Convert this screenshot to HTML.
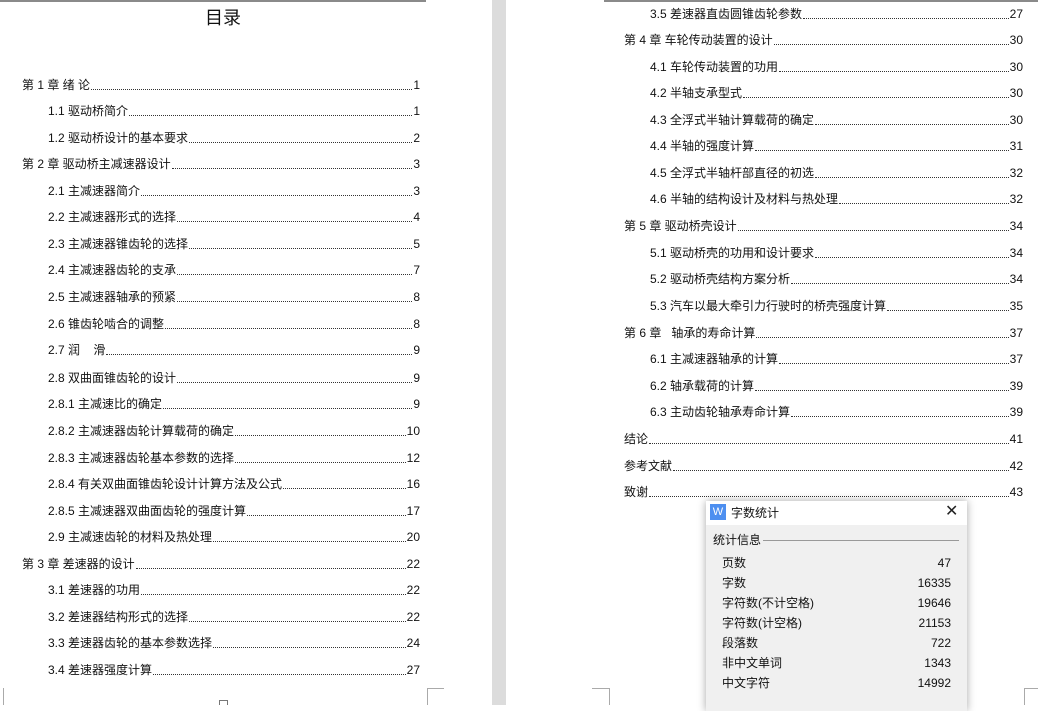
<!DOCTYPE html>
<html><head><meta charset="utf-8"><style>
*{margin:0;padding:0;box-sizing:border-box}
body{width:1038px;height:705px;overflow:hidden;background:#fff;position:relative;font-family:"Liberation Sans","Noto Sans CJK SC",sans-serif;color:#111}
.gap{position:absolute;left:492px;top:0;width:14px;height:705px;background:#dcdcdc}
.r{position:absolute;display:flex;align-items:flex-end;font-size:12px;line-height:14px;height:14px;white-space:nowrap}
.r .d{flex:1;border-bottom:1px dotted #333;margin:0 1px 2px 1px}
.l{left:0;width:420px}
.rt{left:0;width:1023px}
.hl{position:absolute;top:0;height:2px;background:#8a8a8a}
.cm{position:absolute;border-color:#aaa;border-style:solid;border-width:0}
.dlg{position:absolute;left:706px;top:501px;width:261px;height:210px;background:#f0f0f0;box-shadow:0 0 8px rgba(0,0,0,.35)}
.tb{height:24px;background:#fff;position:relative;font-size:12px}
.dr{position:absolute;left:16px;width:229px;display:flex;justify-content:space-between;font-size:12px;line-height:14px}
</style></head><body>
<div class="gap"></div>
<div class="hl" style="left:0;width:426px"></div>
<div class="hl" style="left:604px;width:434px"></div>
<div style="position:absolute;left:0;width:446px;top:6px;text-align:center;font-size:18px;line-height:24px">目录</div>

<div class="r l" style="top:78px;padding-left:22px"><span>第 1 章 绪 论</span><span class="d"></span><span>1</span></div>
<div class="r l" style="top:104px;padding-left:48px"><span>1.1 驱动桥简介</span><span class="d"></span><span>1</span></div>
<div class="r l" style="top:131px;padding-left:48px"><span>1.2 驱动桥设计的基本要求</span><span class="d"></span><span>2</span></div>
<div class="r l" style="top:157px;padding-left:22px"><span>第 2 章 驱动桥主减速器设计</span><span class="d"></span><span>3</span></div>
<div class="r l" style="top:184px;padding-left:48px"><span>2.1 主减速器简介</span><span class="d"></span><span>3</span></div>
<div class="r l" style="top:210px;padding-left:48px"><span>2.2 主减速器形式的选择</span><span class="d"></span><span>4</span></div>
<div class="r l" style="top:237px;padding-left:48px"><span>2.3 主减速器锥齿轮的选择</span><span class="d"></span><span>5</span></div>
<div class="r l" style="top:263px;padding-left:48px"><span>2.4 主减速器齿轮的支承</span><span class="d"></span><span>7</span></div>
<div class="r l" style="top:290px;padding-left:48px"><span>2.5 主减速器轴承的预紧</span><span class="d"></span><span>8</span></div>
<div class="r l" style="top:317px;padding-left:48px"><span>2.6 锥齿轮啮合的调整</span><span class="d"></span><span>8</span></div>
<div class="r l" style="top:343px;padding-left:48px"><span>2.7 润&nbsp;&nbsp;&nbsp;&nbsp;滑</span><span class="d"></span><span>9</span></div>
<div class="r l" style="top:371px;padding-left:48px"><span>2.8 双曲面锥齿轮的设计</span><span class="d"></span><span>9</span></div>
<div class="r l" style="top:397px;padding-left:48px"><span>2.8.1 主减速比的确定</span><span class="d"></span><span>9</span></div>
<div class="r l" style="top:424px;padding-left:48px"><span>2.8.2 主减速器齿轮计算载荷的确定</span><span class="d"></span><span>10</span></div>
<div class="r l" style="top:451px;padding-left:48px"><span>2.8.3 主减速器齿轮基本参数的选择</span><span class="d"></span><span>12</span></div>
<div class="r l" style="top:477px;padding-left:48px"><span>2.8.4 有关双曲面锥齿轮设计计算方法及公式</span><span class="d"></span><span>16</span></div>
<div class="r l" style="top:504px;padding-left:48px"><span>2.8.5 主减速器双曲面齿轮的强度计算</span><span class="d"></span><span>17</span></div>
<div class="r l" style="top:530px;padding-left:48px"><span>2.9 主减速齿轮的材料及热处理</span><span class="d"></span><span>20</span></div>
<div class="r l" style="top:557px;padding-left:22px"><span>第 3 章 差速器的设计</span><span class="d"></span><span>22</span></div>
<div class="r l" style="top:583px;padding-left:48px"><span>3.1 差速器的功用</span><span class="d"></span><span>22</span></div>
<div class="r l" style="top:610px;padding-left:48px"><span>3.2 差速器结构形式的选择</span><span class="d"></span><span>22</span></div>
<div class="r l" style="top:636px;padding-left:48px"><span>3.3 差速器齿轮的基本参数选择</span><span class="d"></span><span>24</span></div>
<div class="r l" style="top:663px;padding-left:48px"><span>3.4 差速器强度计算</span><span class="d"></span><span>27</span></div>

<div class="r rt" style="top:7px;padding-left:650px"><span>3.5 差速器直齿圆锥齿轮参数</span><span class="d"></span><span>27</span></div>
<div class="r rt" style="top:33px;padding-left:624px"><span>第 4 章 车轮传动装置的设计</span><span class="d"></span><span>30</span></div>
<div class="r rt" style="top:60px;padding-left:650px"><span>4.1 车轮传动装置的功用</span><span class="d"></span><span>30</span></div>
<div class="r rt" style="top:86px;padding-left:650px"><span>4.2 半轴支承型式</span><span class="d"></span><span>30</span></div>
<div class="r rt" style="top:113px;padding-left:650px"><span>4.3 全浮式半轴计算载荷的确定</span><span class="d"></span><span>30</span></div>
<div class="r rt" style="top:139px;padding-left:650px"><span>4.4 半轴的强度计算</span><span class="d"></span><span>31</span></div>
<div class="r rt" style="top:166px;padding-left:650px"><span>4.5 全浮式半轴杆部直径的初选</span><span class="d"></span><span>32</span></div>
<div class="r rt" style="top:192px;padding-left:650px"><span>4.6 半轴的结构设计及材料与热处理</span><span class="d"></span><span>32</span></div>
<div class="r rt" style="top:219px;padding-left:624px"><span>第 5 章 驱动桥壳设计</span><span class="d"></span><span>34</span></div>
<div class="r rt" style="top:246px;padding-left:650px"><span>5.1 驱动桥壳的功用和设计要求</span><span class="d"></span><span>34</span></div>
<div class="r rt" style="top:272px;padding-left:650px"><span>5.2 驱动桥壳结构方案分析</span><span class="d"></span><span>34</span></div>
<div class="r rt" style="top:299px;padding-left:650px"><span>5.3 汽车以最大牵引力行驶时的桥壳强度计算</span><span class="d"></span><span>35</span></div>
<div class="r rt" style="top:326px;padding-left:624px"><span>第 6 章&nbsp;&nbsp;&nbsp;轴承的寿命计算</span><span class="d"></span><span>37</span></div>
<div class="r rt" style="top:352px;padding-left:650px"><span>6.1 主减速器轴承的计算</span><span class="d"></span><span>37</span></div>
<div class="r rt" style="top:379px;padding-left:650px"><span>6.2 轴承载荷的计算</span><span class="d"></span><span>39</span></div>
<div class="r rt" style="top:405px;padding-left:650px"><span>6.3 主动齿轮轴承寿命计算</span><span class="d"></span><span>39</span></div>
<div class="r rt" style="top:432px;padding-left:624px"><span>结论</span><span class="d"></span><span>41</span></div>
<div class="r rt" style="top:459px;padding-left:624px"><span>参考文献</span><span class="d"></span><span>42</span></div>
<div class="r rt" style="top:485px;padding-left:624px"><span>致谢</span><span class="d"></span><span>43</span></div>

<div class="cm" style="left:3px;top:688px;width:1px;height:17px;border-left-width:1px"></div>
<div class="cm" style="left:427px;top:688px;width:17px;height:17px;border-left-width:1px;border-top-width:1px"></div>
<div style="position:absolute;left:219px;top:700px;width:9px;height:5px;border-top:1px solid #777;border-left:1px solid #777;border-right:1px solid #777"></div>
<div class="cm" style="left:592px;top:688px;width:18px;height:17px;border-right-width:1px;border-top-width:1px"></div>
<div class="cm" style="left:1024px;top:688px;width:14px;height:17px;border-left-width:1px;border-top-width:1px"></div>

<div class="dlg">
 <div class="tb">
  <div style="position:absolute;left:4px;top:3px;width:16px;height:16px;background:#4d8ff0;color:#fff;font-size:11px;line-height:16px;text-align:center">W</div>
  <div style="position:absolute;left:25px;top:4px;line-height:16px">字数统计</div>
  <div style="position:absolute;left:239px;top:2px;font-size:16px;line-height:18px;color:#222">✕</div>
 </div>
 <div style="position:absolute;left:7px;top:32px;font-size:12px;line-height:14px">统计信息</div>
 <div style="position:absolute;left:57px;top:39px;width:196px;height:1px;background:#999"></div>
 <div class="dr" style="top:55px"><span>页数</span><span>47</span></div>
 <div class="dr" style="top:75px"><span>字数</span><span>16335</span></div>
 <div class="dr" style="top:95px"><span>字符数(不计空格)</span><span>19646</span></div>
 <div class="dr" style="top:115px"><span>字符数(计空格)</span><span>21153</span></div>
 <div class="dr" style="top:135px"><span>段落数</span><span>722</span></div>
 <div class="dr" style="top:155px"><span>非中文单词</span><span>1343</span></div>
 <div class="dr" style="top:175px"><span>中文字符</span><span>14992</span></div>
</div>
</body></html>
